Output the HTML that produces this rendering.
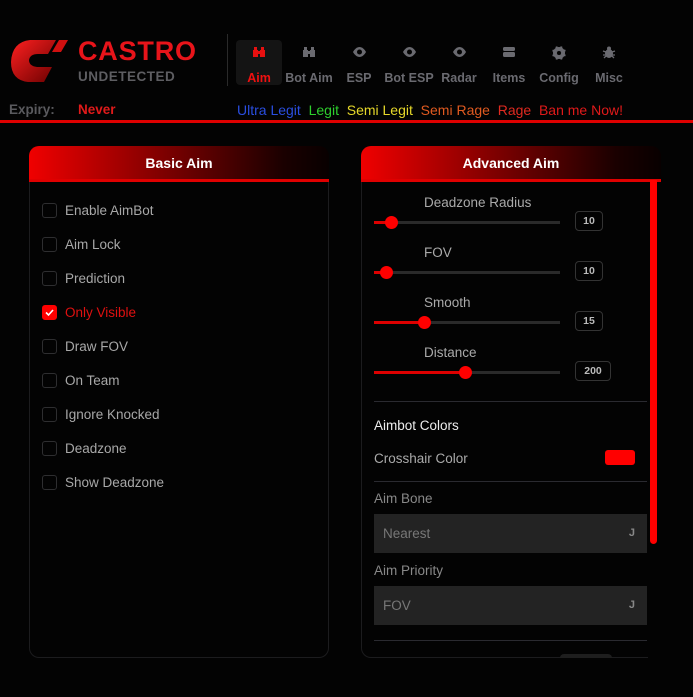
<!DOCTYPE html>
<html><head><style>
*{box-sizing:border-box;margin:0;padding:0}
body{width:693px;height:697px;background:#030303;font-family:"Liberation Sans",sans-serif;position:relative;overflow:hidden;color:#aaa}
.a{position:absolute;white-space:nowrap}
.tab{position:absolute;top:40px;width:46px;height:45px;text-align:center;color:#6a6a70;font-size:12.5px;font-weight:bold}
.tab svg{position:absolute;left:16px;top:6px}
.tab span{position:absolute;left:-10px;right:-10px;top:31px}
.hdr{position:absolute;height:36px;border-radius:10px 10px 0 0;background:linear-gradient(90deg,#f00000 0%,#8a0000 40%,#1a0000 85%,#080000 100%);border-bottom:3px solid #e00000;color:#fff;font-weight:bold;font-size:14px;text-align:center;line-height:34px}
.body{position:absolute;border:1px solid #1c1c1e;border-top:none;border-radius:0 0 10px 10px}
.cb{position:absolute;left:42px;width:15px;height:15px;border:1px solid #2e2e30;border-radius:3px}
.cl{position:absolute;left:65px;font-size:13.5px;color:#a8a8a8}
.trk{position:absolute;left:374px;width:186px;height:3px;background:#2a2a2a}
.fill{position:absolute;left:0;top:0;height:3px;background:#d00}
.th{position:absolute;top:-5px;width:13px;height:13px;border-radius:50%;background:#f00;margin-left:-6px}
.val{position:absolute;height:20px;border:1px solid #333;border-radius:4px;font-size:10.5px;font-weight:bold;color:#bbb;text-align:center;line-height:19px}
.sl{position:absolute;left:424px;font-size:13.5px;color:#aaa}
.dv{position:absolute;left:374px;width:273px;height:1px;background:#2a2a30}
.dd{position:absolute;left:374px;width:273px;height:39px;background:#232323;color:#777;font-size:13.5px;line-height:39px;padding-left:9px}
.dd b{position:absolute;right:12px;color:#888;font-size:11px}
</style></head><body>
<svg class="a" style="left:10px;top:38px" width="60" height="46" viewBox="0 0 60 46">
<defs><linearGradient id="g" x1="0" y1="0" x2="1" y2="1"><stop offset="0" stop-color="#ff2020"/><stop offset="1" stop-color="#6a0000"/></linearGradient></defs>
<path d="M20 2 L46 2 L38 16 L28 16 Q20 16 19 22 Q19 28 27 29 L42 29 L34 44 L18 44 Q1 42 1 24 Q2 4 20 2Z" fill="url(#g)"/>
<path d="M49 2 L58 2 L51 14 L42 14Z" fill="#d01010"/>
</svg>
<div class="a" style="left:78px;top:36px;font-size:27px;font-weight:bold;color:#e8141a;letter-spacing:0.8px">CASTRO</div>
<div class="a" style="left:78px;top:69px;font-size:13.5px;font-weight:bold;color:#5e5e62;letter-spacing:0.5px">UNDETECTED</div>
<div class="a" style="left:227px;top:34px;width:1px;height:52px;background:#2a2a2a"></div>

<div class="tab" style="left:236px;background:#141414;border-radius:4px;color:#f01010"><svg width="14" height="12" viewBox="0 0 14 12"><path d="M1 4h5v7H1zM8 4h5v7H8zM2 1h3v3H2zM9 1h3v3H9zM5 5h4v3H5z" fill="#e81010"/></svg><span>Aim</span></div>
<div class="tab" style="left:286px"><svg width="14" height="12" viewBox="0 0 14 12"><path d="M1 4h5v7H1zM8 4h5v7H8zM2 1h3v3H2zM9 1h3v3H9zM5 5h4v3H5z" fill="#6a6a70"/></svg><span>Bot Aim</span></div>
<div class="tab" style="left:336px"><svg width="15" height="12" viewBox="0 0 15 12"><path d="M7.5 1C3.5 1 1 6 1 6s2.5 5 6.5 5S14 6 14 6 11.5 1 7.5 1z" fill="#6a6a70"/><circle cx="7.5" cy="6" r="2.5" fill="#030303"/></svg><span>ESP</span></div>
<div class="tab" style="left:386px"><svg width="15" height="12" viewBox="0 0 15 12"><path d="M7.5 1C3.5 1 1 6 1 6s2.5 5 6.5 5S14 6 14 6 11.5 1 7.5 1z" fill="#6a6a70"/><circle cx="7.5" cy="6" r="2.5" fill="#030303"/></svg><span>Bot ESP</span></div>
<div class="tab" style="left:436px"><svg width="15" height="12" viewBox="0 0 15 12"><path d="M7.5 1C3.5 1 1 6 1 6s2.5 5 6.5 5S14 6 14 6 11.5 1 7.5 1z" fill="#6a6a70"/><circle cx="7.5" cy="6" r="2.5" fill="#030303"/></svg><span>Radar</span></div>
<div class="tab" style="left:486px"><svg width="14" height="12" viewBox="0 0 14 12"><rect x="1" y="1" width="12" height="4" rx="1.5" fill="#6a6a70"/><rect x="1" y="6" width="12" height="5" rx="1.5" fill="#6a6a70"/></svg><span>Items</span></div>
<div class="tab" style="left:536px"><svg width="14" height="14" viewBox="0 0 14 14"><circle cx="7" cy="7" r="4.5" fill="none" stroke="#6a6a70" stroke-width="3"/><path d="M6 0h2v14H6zM0 6h14v2H0z" fill="#6a6a70" transform="rotate(22 7 7)"/><path d="M6 0h2v14H6zM0 6h14v2H0z" fill="#6a6a70" transform="rotate(67 7 7)"/><circle cx="7" cy="7" r="2" fill="#030303"/></svg><span>Config</span></div>
<div class="tab" style="left:586px"><svg width="14" height="13" viewBox="0 0 14 13"><ellipse cx="7" cy="7.5" rx="4" ry="4.5" fill="#6a6a70"/><circle cx="7" cy="2.5" r="2" fill="#6a6a70"/><path d="M1 5l3 1M1 9h3M2 12l2-2M13 5l-3 1M13 9h-3M12 12l-2-2" stroke="#6a6a70" stroke-width="1.3"/></svg><span>Misc</span></div>

<div class="a" style="left:9px;top:102px;font-size:13.5px;color:#5a5a5e;font-weight:bold">Expiry:</div>
<div class="a" style="left:78px;top:102px;font-size:13.5px;color:#e01a1a;font-weight:bold">Never</div>
<div class="a" style="left:237px;top:102px;font-size:14px"><span style="color:#2a4ee0">Ultra Legit</span>&nbsp; <span style="color:#2ed02e">Legit</span>&nbsp; <span style="color:#e6d82a">Semi Legit</span>&nbsp; <span style="color:#e05a20">Semi Rage</span>&nbsp; <span style="color:#e02a20">Rage</span>&nbsp; <span style="color:#e01a1a">Ban me Now!</span></div>
<div class="a" style="left:0;top:120px;width:693px;height:3px;background:#e00000"></div>

<div class="hdr" style="left:29px;top:146px;width:300px">Basic Aim</div>
<div class="body" style="left:29px;top:182px;width:300px;height:476px"></div>
<div class="cb" style="top:203px"></div><div class="cl" style="top:203px">Enable AimBot</div>
<div class="cb" style="top:237px"></div><div class="cl" style="top:237px">Aim Lock</div>
<div class="cb" style="top:271px"></div><div class="cl" style="top:271px">Prediction</div>
<div class="cb" style="top:305px;background:#f00;border-color:#f00"><svg width="13" height="13" viewBox="0 0 13 13" style="position:absolute;left:0;top:0"><path d="M3 6.5l2.5 2.5 4.5-5" stroke="#fff" stroke-width="1.6" fill="none"/></svg></div><div class="cl" style="top:305px;color:#e01010">Only Visible</div>
<div class="cb" style="top:339px"></div><div class="cl" style="top:339px">Draw FOV</div>
<div class="cb" style="top:373px"></div><div class="cl" style="top:373px">On Team</div>
<div class="cb" style="top:407px"></div><div class="cl" style="top:407px">Ignore Knocked</div>
<div class="cb" style="top:441px"></div><div class="cl" style="top:441px">Deadzone</div>
<div class="cb" style="top:475px"></div><div class="cl" style="top:475px">Show Deadzone</div>

<div class="hdr" style="left:361px;top:146px;width:300px">Advanced Aim</div>
<div class="body" style="left:361px;top:182px;width:287px;height:476px;border-right:none;border-radius:0 0 0 10px"></div>
<div class="a" style="left:650px;top:180px;width:7px;height:364px;background:#f00;border-radius:0 0 4px 4px"></div>

<div class="sl" style="top:195px">Deadzone Radius</div>
<div class="trk" style="top:221px"><div class="fill" style="width:17px"></div><div class="th" style="left:17px"></div></div>
<div class="val" style="left:575px;top:211px;width:28px">10</div>
<div class="sl" style="top:245px">FOV</div>
<div class="trk" style="top:271px"><div class="fill" style="width:12px"></div><div class="th" style="left:12px"></div></div>
<div class="val" style="left:575px;top:261px;width:28px">10</div>
<div class="sl" style="top:295px">Smooth</div>
<div class="trk" style="top:321px"><div class="fill" style="width:50px"></div><div class="th" style="left:50px"></div></div>
<div class="val" style="left:575px;top:311px;width:28px">15</div>
<div class="sl" style="top:345px">Distance</div>
<div class="trk" style="top:371px"><div class="fill" style="width:91px"></div><div class="th" style="left:91px"></div></div>
<div class="val" style="left:575px;top:361px;width:36px">200</div>

<div class="dv" style="top:401px"></div>
<div class="a" style="left:374px;top:418px;font-size:13.5px;color:#eee">Aimbot Colors</div>
<div class="a" style="left:374px;top:451px;font-size:13.5px;color:#aaa">Crosshair Color</div>
<div class="a" style="left:605px;top:450px;width:30px;height:15px;background:#f00;border-radius:3px"></div>
<div class="dv" style="top:481px"></div>
<div class="a" style="left:374px;top:491px;font-size:13.5px;color:#888">Aim Bone</div>
<div class="dd" style="top:514px">Nearest<b>J</b></div>
<div class="a" style="left:374px;top:563px;font-size:13.5px;color:#888">Aim Priority</div>
<div class="dd" style="top:586px">FOV<b>J</b></div>
<div class="dv" style="top:640px"></div>
<div class="a" style="left:560px;top:654px;width:52px;height:4px;background:#1e1e1e;border-radius:4px 4px 0 0"></div>
</body></html>
